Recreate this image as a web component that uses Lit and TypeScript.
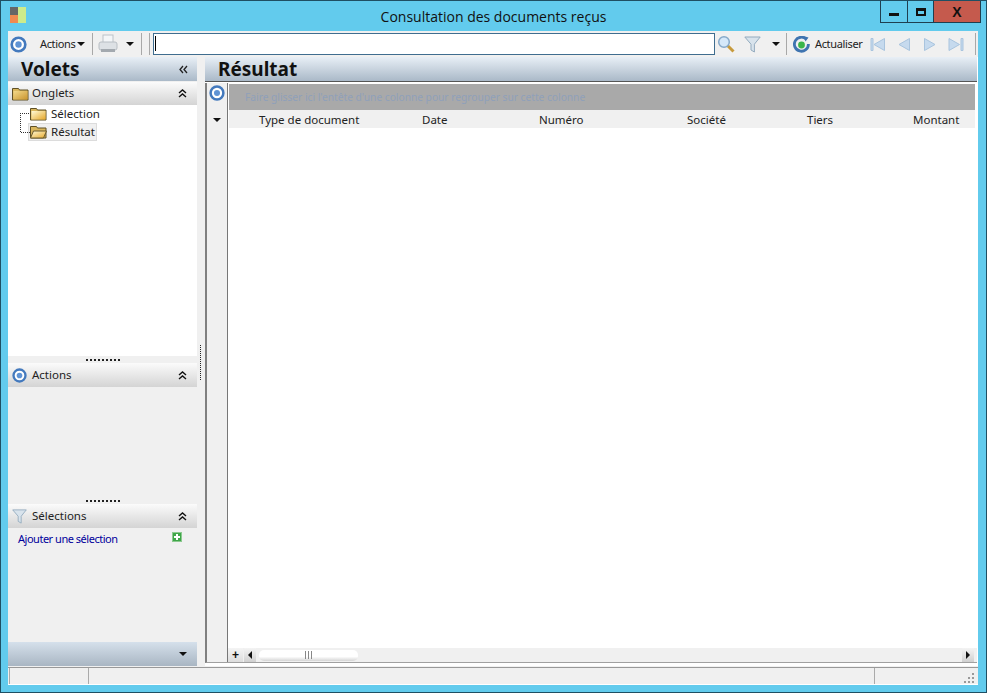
import { LitElement, html, css, svg } from "lit";
import { customElement } from "lit/decorators.js";

const target = (s = 18) => html`<svg class="ic" width=${s} height=${s} viewBox="0 0 18 18"><circle cx="9" cy="9" r="7.2" fill="#fff" stroke="#4379bd" stroke-width="2.8"/><circle cx="9" cy="9" r="3.4" fill="#5f93d4"/></svg>`;
const folder = (open = false, dark = false) => html`<svg class="ic" width="17" height="14" viewBox="0 0 17 14">
  <defs>
    <linearGradient id="fg" x1="0" y1="0" x2="1" y2="1"><stop offset="0" stop-color="#fffbd8"/><stop offset="1" stop-color="#e6a82a"/></linearGradient>
    <linearGradient id="fd" x1="0" y1="0" x2="1" y2="1"><stop offset="0" stop-color="#f3d98a"/><stop offset="1" stop-color="#c9952f"/></linearGradient>
  </defs>
  <path d="M.5 13V1.5h6l1 1.5h8.5v10z" fill="#d9b65c" stroke="#5f5026"/>
  ${open
    ? svg`<path d="M.5 13l3-7h13l-3 7z" fill="url(#fg)" stroke="#6b5a2c"/>`
    : svg`<rect x="1.5" y="4" width="14" height="8.5" fill=${dark ? "url(#fd)" : "url(#fg)"}/>`}
</svg>`;
const chevUp = html`<svg class="ic" width="9" height="9" viewBox="0 0 9 9"><path d="M1 4l3.5-3 3.5 3M1 8l3.5-3 3.5 3" fill="none" stroke="#111" stroke-width="1.4"/></svg>`;
const chevLeft = html`<svg class="ic" width="9" height="9" viewBox="0 0 9 9"><path d="M4 1L1 4.5 4 8M8 1L5 4.5 8 8" fill="none" stroke="#222" stroke-width="1.3"/></svg>`;
const caret = html`<svg class="ic" width="8" height="4" viewBox="0 0 8 4"><path d="M0 0h8L4 4z" fill="#111"/></svg>`;
const funnel = (s = 17) => html`<svg class="ic" width=${s} height=${s} viewBox="0 0 17 17"><path d="M.8 1h15.4L10.4 8.2V16L7 14V8.2z" fill="#d8e3ec" stroke="#93abbe"/></svg>`;
const nav = (d: string) => html`<svg class="ic" width="16" height="15" viewBox="0 0 16 15"><path d=${d} fill="#c6daee" stroke="#a9c4de"/></svg>`;
const gap = (n: number) => html`<span class="g${n}"></span>`;

@customElement("app-root")
export class AppRoot extends LitElement {
  static styles = css`
    :host { display: block; width: 987px; height: 693px; font-family: "Noto Sans", sans-serif; font-size: 11.5px; color: #222; }
    * { box-sizing: border-box; }
    .ic { display: block; flex: none; }
    .win { width: 987px; height: 693px; background: #62cbed; border: 1px solid #1f4f63; display: flex; flex-direction: column; padding: 0 7px 7px; }
    .title { height: 30px; flex: none; display: flex; align-items: flex-start; position: relative; margin: 0 -7px 0; padding: 6px 0 0 9px; }
    .logo { width: 16px; height: 16px; display: grid; grid-template-columns: 8px 8px; grid-template-rows: 8px 8px; }
    .logo i:nth-child(1) { background: #666; }
    .logo i:nth-child(2) { background: #cdeb8b; grid-row: span 2; }
    .logo i:nth-child(3) { background: #f08a50; }
    .title-text { position: absolute; left: 0; right: 0; top: 6px; text-align: center; font-family: "Open Sans", sans-serif; font-size: 14px; line-height: 20px; color: #111; }
    .caption { margin-left: auto; margin-top: -6px; margin-right: 5px; display: flex; height: 22px; border: 1px solid #1f3f50; border-top: none; position: relative; }
    .caption div { display: flex; align-items: center; justify-content: center; }
    .c-min { width: 27px; border-right: 1px solid #1f3f50; }
    .c-max { width: 26px; border-right: 1px solid #1f3f50; }
    .c-close { width: 46px; background: #c55a4d; font: 700 14px "Liberation Sans", sans-serif; color: #111; }
    .c-min b { width: 10px; height: 3px; background: #111; margin-top: 5px; }
    .c-max b { width: 10px; height: 8px; border: 2px solid #111; border-top-width: 3px; }
    .client { flex: 1; min-height: 0; display: flex; flex-direction: column; background: #f0f0f0; width: 970px; }
    .toolbar { height: 26px; flex: none; display: flex; align-items: center; background: #f0f0f0; padding-left: 2px; }
    .g2 { width: 2px; flex: none; } .g3 { width: 3px; flex: none; } .g5 { width: 5px; flex: none; }
    .g6 { width: 6px; flex: none; } .g7 { width: 7px; flex: none; } .g8 { width: 8px; flex: none; }
    .g9 { width: 9px; flex: none; } .g10 { width: 10px; flex: none; } .g11 { width: 11px; flex: none; }
    .g13 { width: 13px; flex: none; }
    .sep { width: 1px; height: 22px; background: #a8a8a8; flex: none; }
    .tb-txt { font-size: 11px; letter-spacing: -0.35px; color: #222; white-space: nowrap; flex: none; margin-top: -2px; }
    .t-act { width: 35px; }
    .t-up { width: 46px; }
    .search { width: 562px; height: 22px; background: #fff; border: 1px solid #3f6d8f; flex: none; padding: 2px 1px; }
    .search i { display: block; width: 1px; height: 15px; background: #000; }
    .body { flex: 1; min-height: 0; display: flex; }
    .left { width: 189px; flex: none; display: flex; flex-direction: column; background: #f0f0f0; }
    .splitter { width: 8px; flex: none; display: flex; align-items: center; justify-content: center; }
    .splitter i { display: block; width: 1px; height: 36px; margin: 0 0 0 -1px; position: relative; top: 1px; background: repeating-linear-gradient(#222 0 1px, transparent 1px 2px); }
    .heading { height: 24px; flex: none; background: linear-gradient(#e8eff6, #aab9c8); display: flex; align-items: center; justify-content: space-between; font: 700 19px/24px "Noto Sans", sans-serif; color: #111; padding: 0 9px 0 13px; }
    .sec { height: 24px; flex: none; background: linear-gradient(#fbfbfb, #d4d4d4); display: flex; align-items: center; padding: 0 10px 0 4px; font-size: 11.5px; gap: 3px; }
    .sec span { flex: 1; margin-top: -2px; }
    .sec.first { margin-top: 1px; height: 23px; }
    .sec.alt { padding-left: 4px; gap: 5px; }
    .tree { flex: none; height: 251px; background: #fff; padding: 0 0 0 20px; }
    .node { height: 18px; display: flex; align-items: center; gap: 4px; position: relative; font-size: 11.5px; width: 69px; padding-left: 2px; }
    .node span { margin-top: -2px; }
    .node.sel { background: #f0f0f0; border: 1px solid #dcdcdc; padding-left: 1px; }
    .node::before { content: ""; position: absolute; left: -8px; top: 8px; width: 9px; border-top: 1px dotted #333; }
    .vline { position: absolute; left: -9px; top: -11px; height: 19px; border-left: 1px dotted #333; margin: 0 !important; }
    .grip { height: 7px; flex: none; background: #f0f0f0; display: flex; justify-content: center; align-items: center; }
    .grip i { display: block; width: 34px; height: 2px; background: repeating-linear-gradient(90deg, #222 0 2px, transparent 2px 4px); }
    .pane { flex: none; height: 110px; }
    .add { height: 114px; flex: none; padding: 4px 10px 0 10px; display: flex; justify-content: space-between; align-items: flex-start; color: #00009c; font-size: 11px; letter-spacing: -0.48px; line-height: 14px; }
    .plus { width: 10px; height: 10px; background: #3fa648; margin-top: 0; position: relative; border: 1px solid #8cc98f; margin-right: 5px; }
    .plus::before { content: ""; position: absolute; left: 1px; right: 1px; top: 3px; height: 2px; background: #fff; }
    .plus::after { content: ""; position: absolute; top: 1px; bottom: 1px; left: 3px; width: 2px; background: #fff; }
    .foot { height: 24px; flex: none; background: linear-gradient(#d5e0eb, #a9b6c3); display: flex; align-items: center; justify-content: flex-end; padding-right: 10px; }
    .main { flex: 1; min-width: 0; display: flex; flex-direction: column; background: #fff; }
    .main .heading { border-bottom: 1px solid #555; padding-left: 13px; height: 25px; margin-right: 1px; }
    .grid { flex: 1; min-height: 0; margin: 1px 1px 3px 0; display: flex; background: #f0f0f0; border-left: 2px solid #808080; border-bottom: 1px solid #a0a0a0; position: relative; }
    .gutter { width: 21px; flex: none; border-right: 1px solid #777; display: flex; flex-direction: column; align-items: center; padding: 2px 1px 0 0; }
    .gutter .ic:last-child { margin-top: 17px; }
    .gridmain { flex: 1; min-width: 0; display: flex; flex-direction: column; background: #fff; padding-left: 1px; padding-right: 2px; }
    .group { height: 26px; flex: none; margin-top: 1px; background: #a9a9a9; font-size: 10.2px; line-height: 26px; padding-left: 16px; color: #8fa0ba; white-space: nowrap; overflow: hidden; }
    .cols { height: 18px; flex: none; background: #f0f0f0; position: relative; display: grid; grid-template-columns: 30px 163px 117px 148px 120px 106px 1fr; align-items: center; font-size: 11.5px; }
    .rows { flex: 1; min-height: 0; }
    .hscroll { height: 14px; flex: none; margin-left: -1px; margin-right: -2px; background: #f0f0f0; display: flex; align-items: center; padding-right: 3px; }
    .hscroll .p { width: 15px; text-align: center; font: 700 12px/14px "Liberation Sans", sans-serif; color: #111; background: linear-gradient(#f4f4f4, #ddd); height: 14px; }
    .sb { width: 12px; height: 14px; background: linear-gradient(#f4f4f4, #d0d0d0); display: flex; align-items: center; justify-content: center; flex: none; margin-left: 1px; }
    .thumb { width: 99px; height: 11px; flex: none; margin-left: 3px; border-radius: 5px; background: linear-gradient(#fff 60%, #d4d4d4); display: flex; align-items: center; justify-content: center; gap: 1px; }
    .thumb i { width: 1px; height: 8px; background: #888; margin: 0 .5px; }
    .sp { flex: 1; }
    .status { height: 18px; flex: none; border-top: 1px solid #999; border-bottom: 1px solid #fff; display: flex; margin-top: 1px; position: relative; background: #f0f0f0; }
    .status div { flex: none; }
    .s1 { width: 80px; margin-left: 1px; border-left: 1px solid #aaa; border-right: 1px solid #aaa; }
    .s2 { width: 786px; border-right: 1px solid #aaa; }
    .s3 { flex: 1 !important; display: flex; justify-content: flex-end; align-items: flex-end; padding: 0 3px 0 0; }
  `;

  render() {
    return html`<div class="win">
      <div class="title">
        <div class="logo"><i></i><i></i><i></i></div>
        <div class="title-text">Consultation des documents reçus</div>
        <div class="caption">
          <div class="c-min"><b></b></div><div class="c-max"><b></b></div><div class="c-close">X</div>
        </div>
      </div>
      <div class="client">
        <div class="toolbar">
          ${target(17)}
          ${gap(13)}<span class="tb-txt t-act">Actions</span>${gap(2)}${caret}
          ${gap(7)}<i class="sep"></i>${gap(5)}
          <svg class="ic" width="20" height="20" viewBox="0 0 20 20"><rect x="5" y="1" width="10" height="8" fill="#f4f6f8" stroke="#bcc2c8"/><rect x="1" y="8" width="18" height="8" rx="2" fill="#dde1e5" stroke="#b8bec4"/><rect x="3" y="15" width="14" height="3" fill="#a3a9af"/></svg>
          ${gap(8)}${caret}${gap(7)}<i class="sep"></i>${gap(7)}<i class="sep"></i>${gap(3)}
          <div class="search"><i></i></div>
          ${gap(2)}
          <svg class="ic" width="18" height="18" viewBox="0 0 18 18"><path d="M10.5 10.5l6 6" stroke="#c79a3c" stroke-width="3"/><circle cx="7" cy="7" r="5.3" fill="#d5e8f9" stroke="#86a9c9" stroke-width="1.5"/></svg>
          ${gap(9)}${funnel(17)}${gap(11)}${caret}
          ${gap(6)}<i class="sep"></i>${gap(6)}
          <svg class="ic" width="17" height="17" viewBox="0 0 17 17"><path d="M13.5 3.4A7 7 0 1 0 15.4 8" fill="none" stroke="#3f74b0" stroke-width="2.8"/><path d="M10.5 0l5 1.5-3 4z" fill="#3f74b0"/><circle cx="8.5" cy="9" r="3.4" fill="#3ab54a"/></svg>
          ${gap(5)}<span class="tb-txt t-up">Actualiser</span>
          ${gap(9)}${nav("M1 1.5h2v12H1zM14.5 1.5v12L4 7.5z")}
          ${gap(10)}${nav("M13.5 1.5v12L3 7.5z")}
          ${gap(10)}${nav("M2.5 1.5v12L13 7.5z")}
          ${gap(10)}${nav("M1 1.5v12L11.5 7.5zM13 1.5h2v12h-2z")}
          ${gap(11)}<i class="sep"></i>
        </div>
        <div class="body">
          <div class="left">
            <div class="heading"><span>Volets</span>${chevLeft}</div>
            <div class="sec first">${folder(false, true)}<span>Onglets</span>${chevUp}</div>
            <div class="tree">
              <div class="node">${folder()}<span>Sélection</span></div>
              <div class="node sel"><span class="vline"></span>${folder(true)}<span>Résultat</span></div>
            </div>
            <div class="grip"><i></i></div>
            <div class="sec alt">${target(15)}<span>Actions</span>${chevUp}</div>
            <div class="pane"></div>
            <div class="grip"><i></i></div>
            <div class="sec alt">${funnel(15)}<span>Sélections</span>${chevUp}</div>
            <div class="add"><span>Ajouter une sélection</span><i class="plus"></i></div>
            <div class="foot">${caret}</div>
          </div>
          <div class="splitter"><i></i></div>
          <div class="main">
            <div class="heading"><span>Résultat</span></div>
            <div class="grid">
              <div class="gutter">${target(16)}${caret}</div>
              <div class="gridmain">
                <div class="group">Faire glisser ici l'entête d'une colonne pour regrouper sur cette colonne</div>
                <div class="cols"><span></span><span>Type de document</span><span>Date</span><span>Numéro</span><span>Société</span><span>Tiers</span><span>Montant</span></div>
                <div class="rows"></div>
                <div class="hscroll">
                  <div class="p">+</div>
                  <div class="sb"><svg class="ic" width="4" height="8" viewBox="0 0 4 8"><path d="M4 0v8L0 4z" fill="#111"/></svg></div>
                  <div class="thumb"><i></i><i></i><i></i></div>
                  <div class="sp"></div>
                  <div class="sb"><svg class="ic" width="4" height="8" viewBox="0 0 4 8"><path d="M0 0v8l4-4z" fill="#111"/></svg></div>
                </div>
              </div>
            </div>
          </div>
        </div>
        <div class="status">
          <div class="s1"></div><div class="s2"></div>
          <div class="s3"><svg class="ic" width="11" height="11" viewBox="0 0 11 11"><g fill="#999"><rect x="8" y="0" width="2" height="2"/><rect x="4" y="4" width="2" height="2"/><rect x="8" y="4" width="2" height="2"/><rect x="0" y="8" width="2" height="2"/><rect x="4" y="8" width="2" height="2"/><rect x="8" y="8" width="2" height="2"/></g></svg></div>
        </div>
      </div>
    </div>`;
  }
}
